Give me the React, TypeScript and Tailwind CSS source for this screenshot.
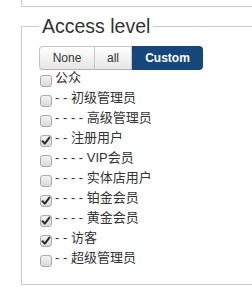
import React from "react";

const rows: { prefix: string; label: string; checked: boolean }[] = [
  { prefix: "", label: "公众", checked: false },
  { prefix: "- - ", label: "初级管理员", checked: false },
  { prefix: "- - - - ", label: "高级管理员", checked: false },
  { prefix: "- - ", label: "注册用户", checked: true },
  { prefix: "- - - - ", label: "VIP会员", checked: false },
  { prefix: "- - - - ", label: "实体店用户", checked: false },
  { prefix: "- - - - ", label: "铂金会员", checked: true },
  { prefix: "- - - - ", label: "黄金会员", checked: true },
  { prefix: "- - ", label: "访客", checked: true },
  { prefix: "- - ", label: "超级管理员", checked: false },
];

function Box({ checked }: { checked: boolean }) {
  return (
    <span className="relative w-[12px] h-[12px] shrink-0 rounded-[3px] border border-[#a9a9a9] bg-gradient-to-b from-[#f4f4f4] to-[#d9d9d9] mt-[5px]">
      {checked && (
        <svg viewBox="0 0 12 12" className="absolute left-[-1px] top-[-1px] w-[12px] h-[12px]">
          <path d="M2.6 6.2 L4.8 8.6 L9.4 2.6" fill="none" stroke="#2b2b2b" strokeWidth="2" strokeLinecap="round" strokeLinejoin="round" />
        </svg>
      )}
    </span>
  );
}

export default function App() {
  return (
    <div
      className="w-[252px] h-[292px] overflow-hidden bg-white text-[#333]"
      style={{ fontFamily: '"Liberation Sans", Arial, "Noto Sans CJK SC", sans-serif' }}
    >
      <div className="ml-[21px] w-[280px] h-[7px] border-l border-b border-[#cccccc]" />
      <fieldset className="ml-[21px] w-[280px] border border-[#cccccc] pl-[17px] pb-[14px]">
        <legend className="px-[3px] text-[19.5px] leading-[39px] text-[#333]">Access level</legend>
        <div className="flex h-[24px] text-[12px]">
          <div className="w-[56px] flex items-center justify-center rounded-l-[4px] border border-[#c5c5c5] border-b-[#b3b3b3] bg-gradient-to-b from-white to-[#e6e6e6] text-[#333]">
            None
          </div>
          <div className="w-[37px] flex items-center justify-center border border-l-0 border-[#c5c5c5] border-b-[#b3b3b3] bg-gradient-to-b from-white to-[#e6e6e6] text-[#333]">
            all
          </div>
          <div className="w-[71px] flex items-center justify-center rounded-r-[4px] bg-[#16477a] text-white font-bold">
            Custom
          </div>
        </div>
        <div className="flex flex-col">
          {rows.map((r, i) => (
            <div key={i} className="flex items-start h-[20px] pl-[1px]">
              <Box checked={r.checked} />
              <span className="ml-[3px] text-[13px] leading-[16px] whitespace-pre text-[#333]">
                {r.prefix}
                {r.label}
              </span>
            </div>
          ))}
        </div>
      </fieldset>
    </div>
  );
}
